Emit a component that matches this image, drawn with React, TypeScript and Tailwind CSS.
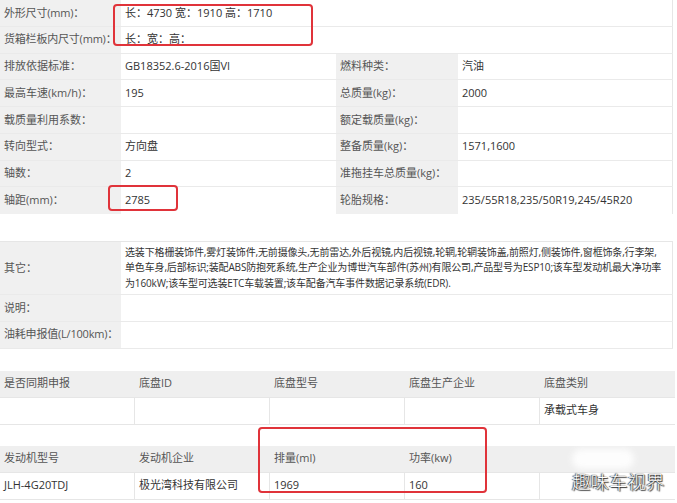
import React from "react";

const font = { fontFamily: '"Open Sans", "Noto Sans CJK SC", sans-serif' };

function Row2({ l1, v1, l2, v2, last }: { l1: string; v1: string; l2: string; v2: string; last?: boolean }) {
  return (
    <div className={`flex h-[26.75px] ${last ? "" : "border-b border-[#eaeaea]"}`}>
      <div className="w-[121px] shrink-0 bg-[#f0f0f0] pl-[4px] flex items-center text-[#555] whitespace-nowrap">{l1}</div>
      <div className="w-[215px] shrink-0 pl-[4px] flex items-center text-[#333]">{v1}</div>
      <div className="w-[122px] shrink-0 bg-[#f0f0f0] pl-[4px] flex items-center text-[#555] whitespace-nowrap">{l2}</div>
      <div className="w-[215px] shrink-0 pl-[4px] flex items-center text-[#333] border-r border-[#e6e6e6]">{v2}</div>
    </div>
  );
}

function Row1({ l, v }: { l: string; v: string }) {
  return (
    <div className="flex h-[26.75px] border-b border-[#eaeaea]">
      <div className="w-[121px] shrink-0 bg-[#f0f0f0] pl-[4px] flex items-center text-[#555] whitespace-nowrap tracking-[-0.2px]">{l}</div>
      <div className="w-[552px] shrink-0 pl-[4px] flex items-center text-[#333] border-r border-[#e6e6e6]">{v}</div>
    </div>
  );
}

function Grid5({ head, data }: { head: string[]; data: string[] }) {
  return (
    <div className="w-[675px]">
      <div className="grid grid-cols-5 h-[27px] bg-[#efefef] border-b border-[#e6e6e6]">
        {head.map((h, i) => (
          <div key={i} className="pl-[4px] flex items-center text-[#555]">{h}</div>
        ))}
      </div>
      <div className="grid grid-cols-5 h-[27px] border-b border-[#e6e6e6]">
        {data.map((d, i) => (
          <div key={i} className={`pl-[4px] flex items-center text-[#333] ${i < 4 ? "border-r border-[#e6e6e6]" : ""}`}>{d}</div>
        ))}
      </div>
    </div>
  );
}

export default function App() {
  return (
    <div className="relative w-[677px] h-[503px] bg-white overflow-hidden text-[11px]" style={font}>
      <div className="flex flex-col">
        <div className="w-[673px]">
          <Row1 l="外形尺寸(mm)：" v="长：4730 宽：1910 高：1710" />
          <Row1 l="货箱栏板内尺寸(mm)：" v="长：宽：高：" />
          <Row2 l1="排放依据标准：" v1="GB18352.6-2016国VI" l2="燃料种类：" v2="汽油" />
          <Row2 l1="最高车速(km/h)：" v1="195" l2="总质量(kg)：" v2="2000" />
          <Row2 l1="载质量利用系数：" v1="" l2="额定载质量(kg)：" v2="" />
          <Row2 l1="转向型式：" v1="方向盘" l2="整备质量(kg)：" v2="1571,1600" />
          <Row2 l1="轴数：" v1="2" l2="准拖挂车总质量(kg)：" v2="" />
          <Row2 l1="轴距(mm)：" v1="2785" l2="轮胎规格：" v2="235/55R18,235/50R19,245/45R20" last />
        </div>

        <div className="mt-[27px] w-[673px] border-t border-[#e6e6e6]">
          <div className="flex h-[53px] border-b border-[#eaeaea]">
            <div className="w-[121px] shrink-0 bg-[#f0f0f0] pl-[4px] flex items-center text-[#555]">其它：</div>
            <div className="w-[552px] shrink-0 pl-[4px] flex flex-col justify-center text-[#333] text-[10px] leading-[15.5px] whitespace-nowrap border-r border-[#e6e6e6] tracking-[-0.15px]">
              <span>选装下格栅装饰件,雾灯装饰件,无前摄像头,无前雷达,外后视镜,内后视镜,轮辋,轮辋装饰盖,前照灯,侧装饰件,窗框饰条,行李架,</span>
              <span>单色车身,后部标识;装配ABS防抱死系统,生产企业为博世汽车部件(苏州)有限公司,产品型号为ESP10;该车型发动机最大净功率</span>
              <span>为160kW;该车型可选装ETC车载装置;该车配备汽车事件数据记录系统(EDR).</span>
            </div>
          </div>
          <Row1 l="说明：" v="" />
          <Row1 l="油耗申报值(L/100km)：" v="" />
        </div>

        <div className="mt-[22px]">
          <Grid5 head={["是否同期申报", "底盘ID", "底盘型号", "底盘生产企业", "底盘类别"]} data={["", "", "", "", "承载式车身"]} />
        </div>

        <div className="mt-[21px]">
          <Grid5 head={["发动机型号", "发动机企业", "排量(ml)", "功率(kw)", ""]} data={["JLH-4G20TDJ", "极光湾科技有限公司", "1969", "160", ""]} />
        </div>
      </div>

      {/* erased blob */}
      <div className="absolute left-[572px] top-[449px] w-[62px] h-[20px] bg-white rounded-full blur-[3px] opacity-90" />

      {/* red highlight boxes */}
      <div className="absolute left-[113px] top-[4px] w-[200px] h-[42px] border-2 border-[#e0333a] rounded-[4px]" />
      <div className="absolute left-[108px] top-[185px] w-[70px] h-[26px] border-2 border-[#e0333a] rounded-[4px]" />
      <div className="absolute left-[258px] top-[427px] w-[229px] h-[66px] border-2 border-[#e0333a] rounded-[4px]" />

      {/* watermark */}
      <div
        className="absolute left-[572px] top-[468px] text-[18.5px] text-white font-light [text-shadow:0_0_1px_#111,1px_1px_1px_#333,-1px_0_1px_#555]"
        style={{ fontFamily: '"Noto Sans CJK SC", sans-serif' }}
      >
        趣味车视界
      </div>
    </div>
  );
}
